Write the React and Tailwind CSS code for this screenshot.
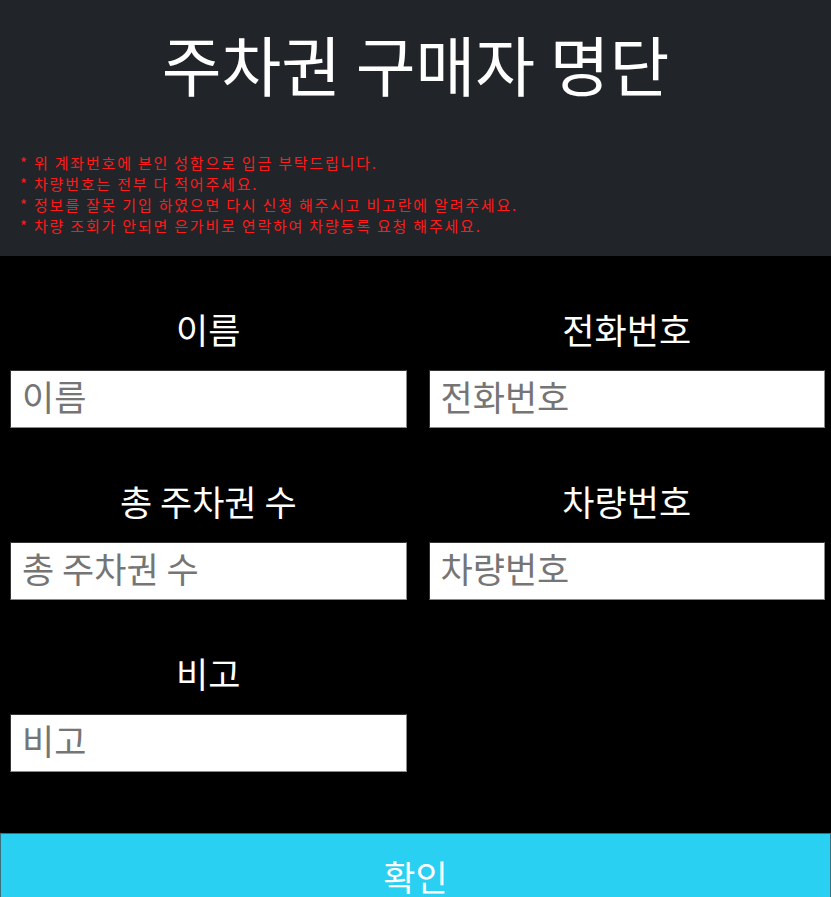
const notices = [
  '* 위 계좌번호에 본인 성함으로 입금 부탁드립니다.',
  '* 차량번호는 전부 다 적어주세요.',
  '* 정보를 잘못 기입 하였으면 다시 신청 해주시고 비고란에 알려주세요.',
  '* 차량 조회가 안되면 은가비로 연락하여 차량등록 요청 해주세요.',
]

const fields = [
  { key: 'name', label: '이름' },
  { key: 'phone', label: '전화번호' },
  { key: 'count', label: '총 주차권 수' },
  { key: 'car', label: '차량번호' },
  { key: 'memo', label: '비고' },
]

function Field({ label }) {
  return (
    <div className="flex flex-col">
      <label className="h-[46px] text-center text-[35px] leading-[46px] text-white">{label}</label>
      <input
        placeholder={label}
        className="mt-[18px] h-[58px] w-full border border-t-[#333] border-l-[#333] border-r-[#8a8a8a] border-b-[#8a8a8a] bg-white px-[11px] pb-[8px] text-[35px] text-black outline-none placeholder:text-[#757575]"
      />
    </div>
  )
}

export default function App() {
  return (
    <div className="h-[897px] overflow-hidden bg-black" style={{ fontFamily: '"Noto Sans CJK KR", "Noto Sans", sans-serif' }}>
      {/* Header */}
      <div className="h-[256px] bg-[#212529] px-5">
        <h1 className="pt-[18px] text-center text-[65px] font-normal leading-[90px] text-white">
          주차권 구매자 명단
        </h1>
        <div className="mt-[44px] text-[15px] leading-[21px] tracking-[1.8px] text-[#ff1a1a]">
          {notices.map((n) => (
            <p key={n}>{n}</p>
          ))}
        </div>
      </div>

      {/* Form */}
      <div className="grid grid-cols-2 gap-x-[22px] gap-y-[50px] pb-[61px] pl-[10px] pr-[6px] pt-[50px]">
        {fields.map((f) => (
          <Field key={f.key} label={f.label} />
        ))}
      </div>

      <button className="block h-[86px] w-full border border-[#3b6f7c] bg-[#29d0f2] text-[35px] text-white">
        확인
      </button>
    </div>
  )
}
